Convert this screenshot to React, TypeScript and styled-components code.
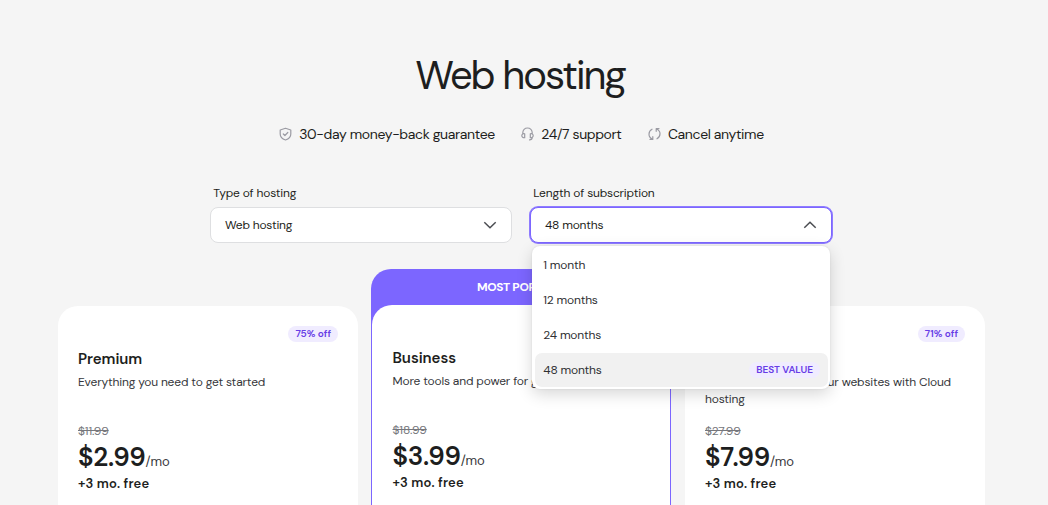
import React from 'react';
import styled, { createGlobalStyle } from 'styled-components';

const Global = createGlobalStyle`
  * { box-sizing: border-box; }
  body { margin: 0; background: #f5f5f5; color: #1d1e20; font-family: "DM Sans", Inter, "Liberation Sans", sans-serif; overflow: hidden; }
`;

const Page = styled.main`
  width: 1048px; height: 505px; overflow: hidden; padding: 48px 6px 0 0;
  display: flex; flex-direction: column; align-items: center;
`;
const Title = styled.h1`
  margin: 0 2px 0 0; font-size: 40px; line-height: 54px; font-weight: 400; letter-spacing: -2px; white-space: nowrap;
`;
const Perks = styled.ul`
  margin: 22px 0 0 1px; padding: 0; list-style: none; display: flex; gap: 26.500px; height: 20px;
`;
const Perk = styled.li`
  display: flex; align-items: center; gap: 7px; font-size: 14px; line-height: 20px; white-space: nowrap;
  letter-spacing: -0.37px;
  svg { flex: none; color: #9b9ba3; }
`;
const Filters = styled.div`
  margin-top: 42px; display: grid; grid-template-columns: 302px 302px; gap: 18px; height: 57px;
`;
const Field = styled.div`
  position: relative; display: flex; flex-direction: column;
`;
const Label = styled.label`
  padding-left: 3.200px; font-size: 12px; line-height: 14px; letter-spacing: -0.17px;
`;
const Select = styled.button<{ $open?: boolean }>`
  margin: 7px 0 0; height: 36px; padding: 0 14px; display: flex; align-items: center; justify-content: space-between;
  background: #fff; border: 1px solid ${p => (p.$open ? '#7c66ff' : '#dedfe1')}; border-radius: 8px;
  box-shadow: ${p => (p.$open ? '0 0 0 1px #8f7cff' : 'none')};
  font: inherit; font-size: 12px; line-height: 16px; color: #1d1e20; letter-spacing: -0.2px;
`;
const Menu = styled.div`
  position: absolute; z-index: 2; top: 60px; left: 2px; width: 298px; height: 143px; padding: 1px 2px 2px 3px;
  background: #fff; border-radius: 8px; box-shadow: 0 5px 16px rgba(0,0,0,.16), 0 0 2px rgba(0,0,0,.1);
`;
const Option = styled.div<{ $active?: boolean }>`
  height: ${p => (p.$active ? 34 : 35)}px; margin-top: ${p => (p.$active ? 1 : 0)}px; padding: 0 8px 0 8.300px;
  display: flex; align-items: center; justify-content: space-between;
  border-radius: 7px; background: ${p => (p.$active ? '#f1f1f1' : 'transparent')};
  font-size: 12px; color: #2f3033; letter-spacing: -0.2px;
`;
const Badge = styled.span`
  height: 16px; padding: 0 7px; border-radius: 8px; background: #f0ecff; color: #673de6;
  font-size: 10px; line-height: 16px; font-weight: 600; white-space: nowrap; letter-spacing: -0.02px;
`;
const Plans = styled.section`
  margin: 26px 0 0 1px; width: 927px; display: grid; grid-template-columns: repeat(3, 300px); gap: 13px; align-items: start;
  > :last-child { margin-left: 1px; margin-right: -1px; }
`;
const Card = styled.article`
  margin-top: 37px; height: 199px; padding: 20px 20px 0;
  background: #fff; border-radius: 20px 20px 0 0; display: flex; flex-direction: column;
`;
const Featured = styled.article`
  height: 236px; background: #7c66ff; border-radius: 20px 20px 0 0; padding: 0 1px; display: flex; flex-direction: column;
`;
const Ribbon = styled.div`
  height: 36px; text-align: center; color: #fff; font-size: 12px; line-height: 36px; font-weight: 700; letter-spacing: -0.35px;
`;
const FeaturedBody = styled.div`
  flex: 1; background: #fff; border-radius: 20px 20px 0 0; padding: 20px 20px 0 20.500px; display: flex; flex-direction: column;
`;
const BadgeRow = styled.div`
  height: 16px; display: flex; justify-content: flex-end;
`;
const Name = styled.h2`
  margin: 7px 0 0; font-size: 15px; line-height: 20px; font-weight: 600; letter-spacing: -0.05px;
`;
const Blurb = styled.p`
  margin: 5px 0 0; height: 34px; font-size: 12px; line-height: 17px; color: #36373b; white-space: pre; letter-spacing: -0.16px;
`;
const Was = styled.s`
  margin-top: 15px; font-size: 12px; line-height: 17px; color: #76777c; letter-spacing: -0.15px;
`;
const Price = styled.div`
  height: 34px; display: flex; align-items: baseline; font-size: 26px; line-height: 34px; font-weight: 600; letter-spacing: -0.25px;
`;
const Per = styled.span`
  font-size: 13px; font-weight: 400; color: #36373b; letter-spacing: 0;
`;
const Bonus = styled.div`
  margin-top: 1px; font-size: 13px; line-height: 18px; font-weight: 600; letter-spacing: 0.15px;
`;

const Icon = ({ children }: { children: React.ReactNode }) => (
  <svg width="13" height="14" viewBox="0 0 13 14" fill="none" stroke="currentColor" strokeWidth="1.2" strokeLinecap="round" strokeLinejoin="round">{children}</svg>
);
const Chevron = ({ up }: { up?: boolean }) => (
  <svg width="14" height="8" viewBox="0 0 14 8" fill="none" stroke="#4b4d52" strokeWidth="1.5">
    <path d={up ? 'M1.300 6.800 7 1.300 12.700 6.800' : 'M1.300 1.200 7 6.700 12.700 1.200'} />
  </svg>
);

type PlanData = { name: string; blurb: string; was: string; price: string; off?: string };
const PlanContent = ({ name, blurb, was, price, off }: PlanData) => (
  <>
    <BadgeRow>{off && <Badge>{off}</Badge>}</BadgeRow>
    <Name>{name}</Name>
    <Blurb>{blurb}</Blurb>
    <Was>{was}</Was>
    <Price>{price}<Per>/mo</Per></Price>
    <Bonus>+3 mo. free</Bonus>
  </>
);

export default function App() {
  return (
    <>
      <Global />
      <Page>
        <Title>Web hosting</Title>
        <Perks>
          <Perk>
            <Icon><path d="M6.500 1.300 11.800 3v4c0 2.900-2 4.800-5.300 6C3.200 11.800 1.200 9.900 1.200 7V3z" /><path d="m4.300 7 1.600 1.500 2.900-3" /></Icon>
            30-day money-back guarantee
          </Perk>
          <Perk>
            <Icon><path d="M1.800 6.500V5.700C1.800 2.900 3.700 1 6.500 1s4.700 1.900 4.700 4.700v.8M3.700 6.800v3.900C2 11 .8 10 .8 8.600c0-1.500 1.300-2.400 2.900-1.800ZM9.300 6.800v3.900c1.700.3 2.900-.7 2.900-2.100 0-1.500-1.300-2.400-2.900-1.800ZM11.200 10.500c0 1.500-1 2.400-2.700 2.400" /></Icon>
            24/7 support
          </Perk>
          <Perk>
            <Icon><path d="M4.800 12.400H2M4.800 12.400V9.700M4.500 12C2.300 11.100 1 9.400 1 7.200 1 5 2.200 3.200 4 2.200M8.200 1.600H11M8.200 1.600v2.700M8.500 2C10.700 2.900 12 4.600 12 6.800c0 2.200-1.200 4-3 5" /></Icon>
            Cancel anytime
          </Perk>
        </Perks>
        <Filters>
          <Field>
            <Label>Type of hosting</Label>
            <Select>Web hosting<Chevron /></Select>
          </Field>
          <Field>
            <Label>Length of subscription</Label>
            <Select $open>48 months<Chevron up /></Select>
            <Menu>
              <Option>1 month</Option>
              <Option>12 months</Option>
              <Option>24 months</Option>
              <Option $active>48 months<Badge>BEST VALUE</Badge></Option>
            </Menu>
          </Field>
        </Filters>
        <Plans>
          <Card><PlanContent name="Premium" blurb="Everything you need to get started" was="$11.99" price="$2.99" off="75% off" /></Card>
          <Featured>
            <Ribbon>MOST POPULAR</Ribbon>
            <FeaturedBody><PlanContent name="Business" blurb="More tools and power for growth" was="$18.99" price="$3.99" /></FeaturedBody>
          </Featured>
          <Card><PlanContent name="Cloud Startup" blurb={'Optimize and boost your websites with Cloud\nhosting'} was="$27.99" price="$7.99" off="71% off" /></Card>
        </Plans>
      </Page>
    </>
  );
}
